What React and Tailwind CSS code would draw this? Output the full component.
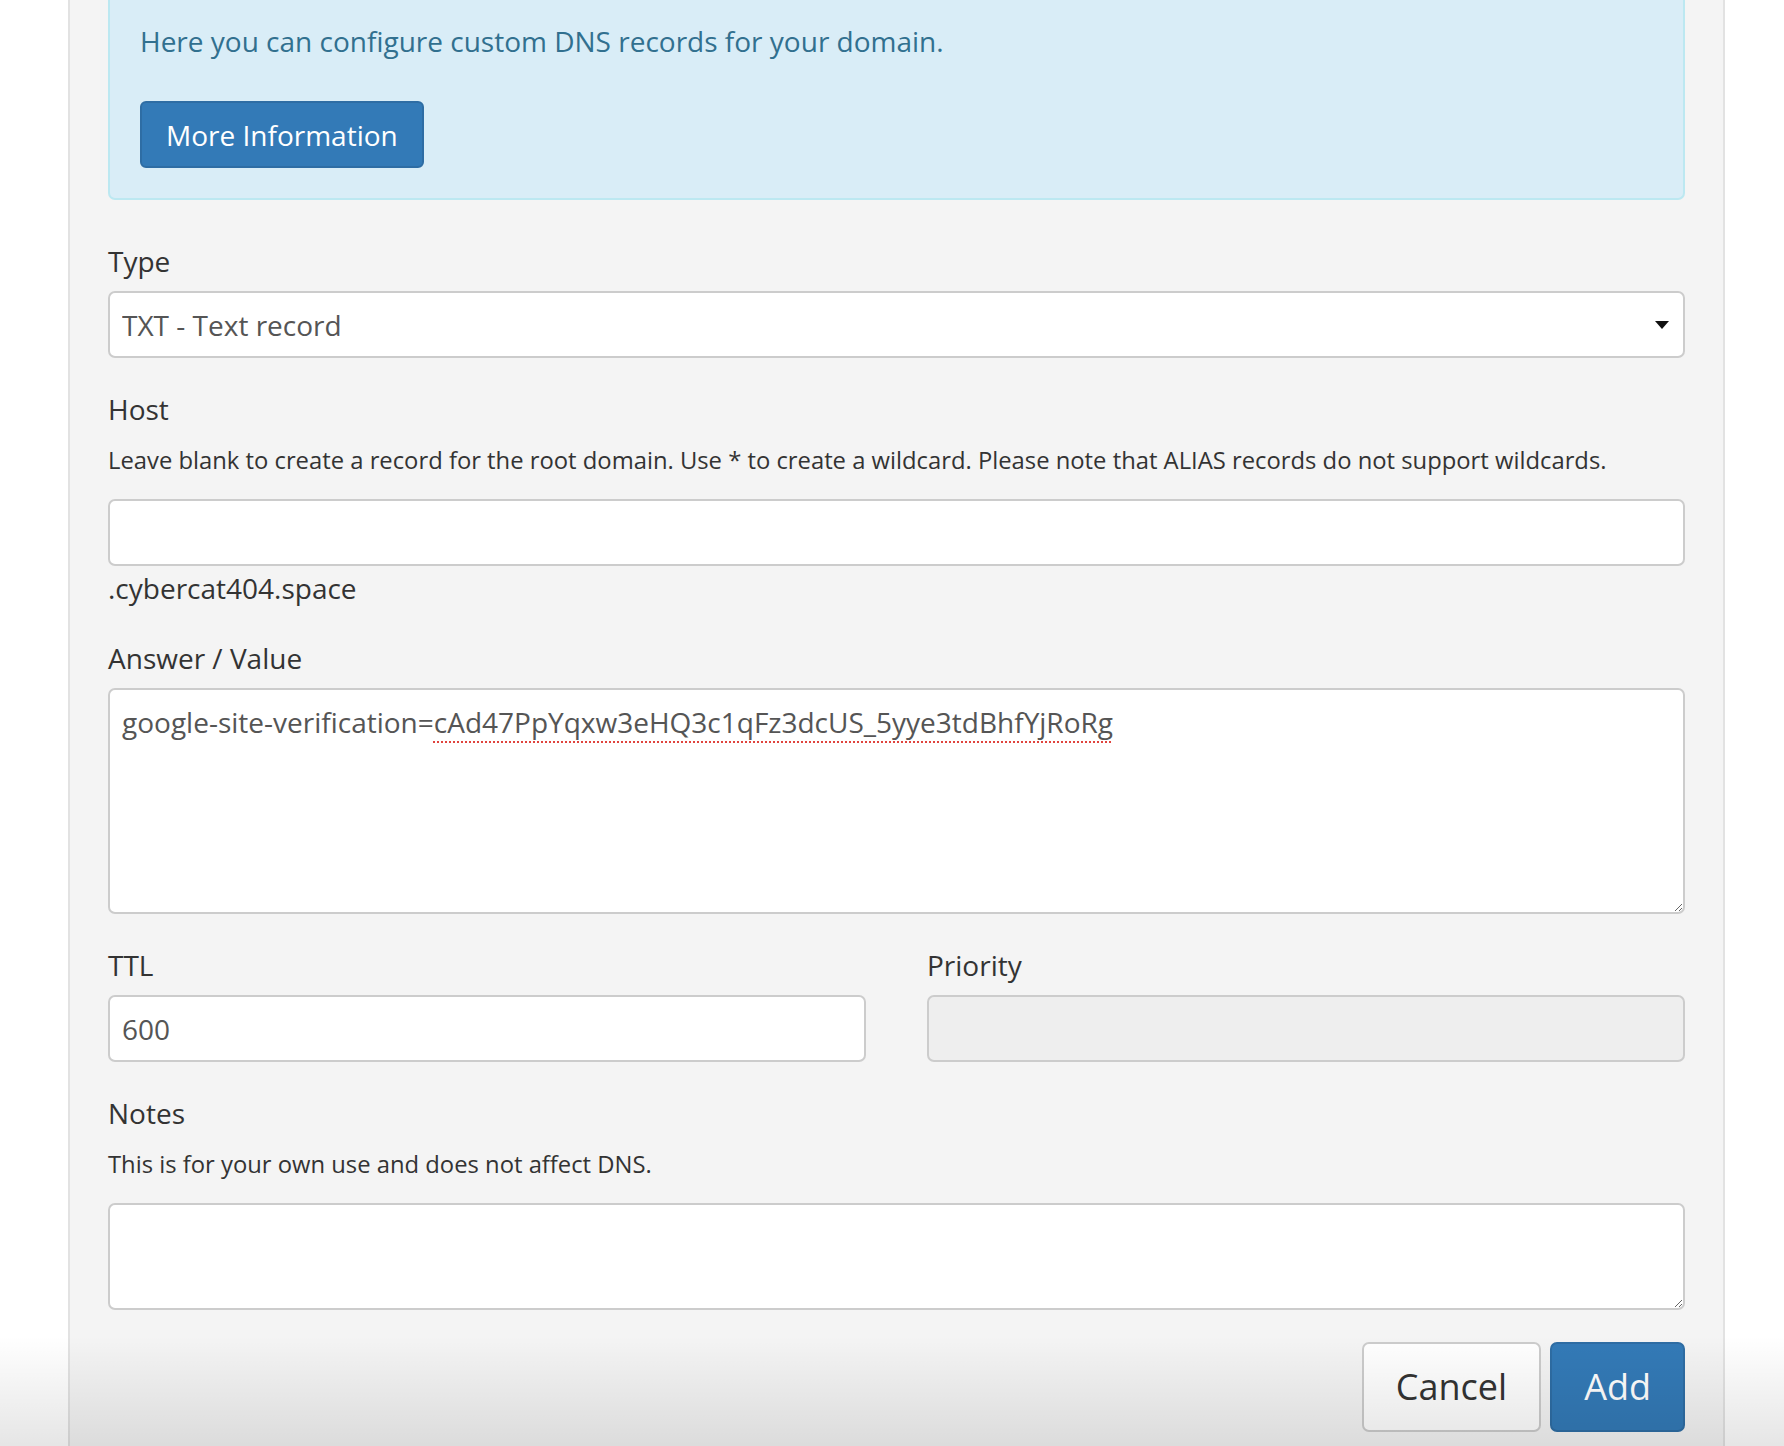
import React from 'react';

const inputCls = 'block w-full h-[67px] rounded-[7px] border-2 border-[#cccccc] pl-[12px] pr-[12px] text-[28px] text-[#555555] outline-none';
const labelCls = 'block text-[28px] leading-[40px] text-[#333333]';
const helpCls = 'text-[23.8px] leading-[34px] text-[#333333]';

const App = () => {
    return (
        <div className="relative min-h-screen overflow-hidden bg-white font-['Open_Sans',sans-serif]">
            <div className="ml-[68px] w-[1657px] min-h-[1446px] bg-[#f4f4f4] border-x-2 border-[#e2e2e2] px-[38px]">
                {/* info box */}
                <div className="bg-[#d9edf7] border-2 border-t-0 border-[#bce8f1] rounded-b-[7px] px-[30px] pt-[21px] pb-[30px]">
                    <p className="text-[28px] leading-[40px] text-[#31708f]">Here you can configure custom DNS records for your domain.</p>
                    <button className="mt-[40px] h-[67px] px-[24px] rounded-[6px] border-2 border-[#2e6da4] bg-[#337ab7] text-[28px] leading-[40px] text-white">
                        More Information
                    </button>
                </div>

                <div className="mt-[41px]">
                    <label className={labelCls}>Type</label>
                    <div className="relative mt-[10px]">
                        <select className={inputCls + ' appearance-none bg-white'} defaultValue="TXT">
                            <option value="A">A - Address record</option>
                            <option value="CNAME">CNAME - Canonical name record</option>
                            <option value="TXT">TXT - Text record</option>
                        </select>
                        <svg className="pointer-events-none absolute right-[16px] top-[30px]" width="14" height="8" viewBox="0 0 14 8">
                            <path d="M0 0 H14 L7 8 Z" fill="#111" />
                        </svg>
                    </div>
                </div>

                <div className="mt-[31px]">
                    <label className={labelCls}>Host</label>
                    <p className={helpCls + ' mt-[14px]'}>Leave blank to create a record for the root domain. Use * to create a wildcard. Please note that ALIAS records do not support wildcards.</p>
                    <input className={inputCls + ' mt-[22px] bg-white'} defaultValue="" />
                    <div className="mt-[2px] text-[28px] leading-[40px] text-[#333333]">.cybercat404.space</div>
                </div>

                <div className="mt-[30px]">
                    <label className={labelCls}>Answer / Value</label>
                    <div className="mt-[10px] h-[226px] w-full resize-y overflow-auto rounded-[7px] border-2 border-[#cccccc] bg-white px-[12px] pt-[12px] text-[28px] leading-[40px] text-[#555555]">
                        google-site-verification=<span className="underline decoration-dotted decoration-[#e0443e] decoration-2 underline-offset-[8px]">cAd47PpYqxw3eHQ3c1qFz3dcUS_5yye3tdBhfYjRoRg</span>
                    </div>
                </div>

                <div className="mt-[31px] grid grid-cols-2 gap-x-[61px]">
                    <div>
                        <label className={labelCls}>TTL</label>
                        <input className={inputCls + ' mt-[10px] bg-white'} defaultValue="600" />
                    </div>
                    <div>
                        <label className={labelCls}>Priority</label>
                        <input className={inputCls + ' mt-[10px] bg-[#eeeeee]'} disabled defaultValue="" />
                    </div>
                </div>

                <div className="mt-[31px]">
                    <label className={labelCls}>Notes</label>
                    <p className={helpCls + ' mt-[14px]'}>This is for your own use and does not affect DNS.</p>
                    <textarea className="mt-[22px] block h-[107px] w-full rounded-[7px] border-2 border-[#cccccc] bg-white px-[12px] py-[11px] text-[28px] text-[#555555] outline-none" defaultValue="" />
                </div>

                <div className="mt-[32px] flex justify-end gap-[9px]">
                    <button className="h-[90px] px-[32px] rounded-[7px] border-2 border-[#cccccc] bg-white text-[36px] leading-[48px] text-[#333333]">Cancel</button>
                    <button className="h-[90px] px-[32px] rounded-[7px] border-2 border-[#2e6da4] bg-[#337ab7] text-[36px] leading-[48px] text-white">Add</button>
                </div>
            </div>

            {/* bottom shade */}
            <div className="pointer-events-none absolute bottom-0 left-0 right-0 h-[110px] bg-gradient-to-b from-transparent to-black/10" />
        </div>
    );
};

export default App;
